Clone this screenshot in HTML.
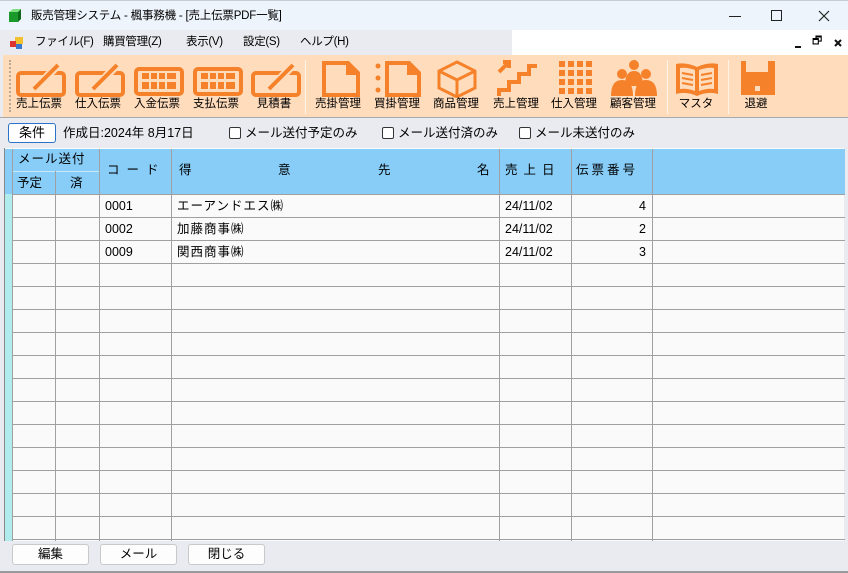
<!DOCTYPE html>
<html><head><meta charset="utf-8"><style>
*{margin:0;padding:0;box-sizing:border-box}
body{width:848px;height:573px;overflow:hidden;background:#e9ebf0;font-family:"Liberation Sans","Noto Sans CJK JP",sans-serif;position:relative;font-size:12px;color:#000}
.abs{position:absolute}
.tb{left:0;top:0;width:848px;height:30px;background:#eef4fb;border-top:1px solid #c8ccd2}
.menu{left:0;top:30px;width:848px;height:25px;background:#fff}
.menu .g{position:absolute;left:0;top:0;width:512px;height:25px;background:#e9ebf0}
.menu span{position:absolute;top:5px;font-size:11.5px;line-height:15px;letter-spacing:-0.3px}
.tool{left:3px;top:55px;width:845px;height:62px;background:#ffdcbc}
.btn{position:absolute;top:0;width:58px;height:62px;text-align:center}
.btn svg{position:absolute;left:4px;top:3px}
.btn .l{position:absolute;left:-6px;right:-6px;top:42px;font-size:11.5px;line-height:15px;text-align:center}
.sep{position:absolute;top:5px;width:1px;height:54px;background:#c8b9a8;border-right:1px solid #fff4ea}
.cond{left:0;top:118px;width:848px;height:30px}
.grid{left:4px;top:148px;width:840px;height:393px;background:#fafafa;border-left:1px solid #888}
.vl{position:absolute;top:1px;width:1px;height:392px;background:#a0a0a0}
.hl{position:absolute;left:7px;height:1px;width:833px;background:#a0a0a0}
.hdr{position:absolute;top:1px;height:45px;background:#87cdf7}
.t{position:absolute;font-size:12.5px;line-height:16px;white-space:nowrap}
.b{position:absolute;top:544px;width:77px;height:21px;background:#fdfdfd;border:1px solid #c9c9c9;border-radius:3px;text-align:center;font-size:12.5px;line-height:19px}
</style></head><body>
<div class="abs tb">
 <svg class="abs" style="left:8px;top:8px" width="14" height="14"><rect x="1" y="3" width="9" height="10" fill="#1a9a2a"/><polygon points="1,3 5,0 13,0 10,3" fill="#7ee07e"/><polygon points="10,3 13,0 13,10 10,13" fill="#0c6a18"/></svg>
 <div class="t" style="left:31px;top:7px;font-size:11.5px;letter-spacing:-0.2px">販売管理システム - 楓事務機 - [売上伝票PDF一覧]</div>
 <div class="abs" style="left:729px;top:15px;width:12px;height:1px;background:#222"></div>
 <div class="abs" style="left:771px;top:9px;width:11px;height:11px;border:1.3px solid #222"></div>
 <svg class="abs" style="left:818px;top:9px" width="12" height="12"><path d="M1 1 L11 11 M11 1 L1 11" stroke="#222" stroke-width="1.2"/></svg>
</div>
<div class="abs menu"><div class="g"></div>
 <svg class="abs" style="left:10px;top:7px" width="13" height="12"><rect x="5" y="0" width="8" height="7" fill="#f3c030"/><rect x="0" y="4" width="6" height="6" fill="#d33"/><rect x="6" y="7" width="6" height="5" fill="#3a78d0"/></svg>
 <span style="left:35px">ファイル(F)</span><span style="left:103px">購買管理(Z)</span><span style="left:186px">表示(V)</span><span style="left:243px">設定(S)</span><span style="left:300px">ヘルプ(H)</span>
 <div class="abs" style="left:795px;top:16px;width:6px;height:2px;background:#111"></div>
 <span style="left:812px;top:4px;font-size:11px">🗗</span>
 <svg class="abs" style="left:834px;top:9px" width="8" height="8"><path d="M1 1 L7 7 M7 1 L1 7" stroke="#111" stroke-width="2"/></svg>
</div>
<div class="abs tool">
 <div class="abs" style="left:6px;top:5px;height:52px;border-left:2px dotted #b8a898"></div>
 <div class="btn" style="left:7px"><svg width="52" height="40"><rect x="4" y="15" width="46" height="22" rx="3" fill="none" stroke="#f5822a" stroke-width="4"/><path d="M20 32 L44 7" stroke="#ffdcbc" stroke-width="8"/><path d="M20 31 L44 7" stroke="#f5822a" stroke-width="4"/></svg><div class="l">売上伝票</div></div>
 <div class="btn" style="left:66px"><svg width="52" height="40"><rect x="4" y="15" width="46" height="22" rx="3" fill="none" stroke="#f5822a" stroke-width="4"/><path d="M20 32 L44 7" stroke="#ffdcbc" stroke-width="8"/><path d="M20 31 L44 7" stroke="#f5822a" stroke-width="4"/></svg><div class="l">仕入伝票</div></div>
 <div class="btn" style="left:125px"><svg width="52" height="40"><rect x="4" y="11" width="46" height="25" rx="3" fill="none" stroke="#f5822a" stroke-width="4"/><g fill="#f5822a"><rect x="10" y="15" width="34" height="6"/><rect x="10" y="24" width="34" height="7"/></g><g fill="#ffdcbc"><rect x="17" y="15" width="2" height="16"/><rect x="25" y="15" width="2" height="16"/><rect x="33" y="15" width="2" height="16"/><rect x="10" y="22" width="34" height="2"/></g></svg><div class="l">入金伝票</div></div>
 <div class="btn" style="left:184px"><svg width="52" height="40"><rect x="4" y="11" width="46" height="25" rx="3" fill="none" stroke="#f5822a" stroke-width="4"/><g fill="#f5822a"><rect x="10" y="15" width="34" height="6"/><rect x="10" y="24" width="34" height="7"/></g><g fill="#ffdcbc"><rect x="17" y="15" width="2" height="16"/><rect x="25" y="15" width="2" height="16"/><rect x="33" y="15" width="2" height="16"/><rect x="10" y="22" width="34" height="2"/></g></svg><div class="l">支払伝票</div></div>
 <div class="btn" style="left:242px"><svg width="52" height="40"><rect x="4" y="15" width="46" height="22" rx="3" fill="none" stroke="#f5822a" stroke-width="4"/><path d="M20 32 L44 7" stroke="#ffdcbc" stroke-width="8"/><path d="M20 31 L44 7" stroke="#f5822a" stroke-width="4"/></svg><div class="l">見積書</div></div>
 <div class="sep" style="left:302px"></div>
 <div class="btn" style="left:306px"><svg width="52" height="40"><path d="M11 5 H35 L45 15 V37 H11 Z" fill="none" stroke="#f5822a" stroke-width="4"/><path d="M33 5 V17 H45" fill="#f5822a"/></svg><div class="l">売掛管理</div></div>
 <div class="btn" style="left:365px"><svg width="52" height="40"><g fill="#f5822a"><circle cx="6" cy="8" r="2.5"/><circle cx="6" cy="20" r="2.5"/><circle cx="6" cy="32" r="2.5"/></g><path d="M15 5 H37 L47 15 V37 H15 Z" fill="none" stroke="#f5822a" stroke-width="4"/><path d="M35 5 V17 H47" fill="#f5822a"/></svg><div class="l">買掛管理</div></div>
 <div class="btn" style="left:424px"><svg width="52" height="40"><path d="M26 4 L44 13 V30 L26 39 L8 30 V13 Z M8 13 L26 22 L44 13 M26 22 V39" fill="none" stroke="#f5822a" stroke-width="3"/></svg><div class="l">商品管理</div></div>
 <div class="btn" style="left:484px"><svg width="52" height="40"><path d="M6 38 V30 H16 V22 H26 V14 H36 V6 H46 V10 H40 V18 H30 V26 H20 V34 H10 V38 Z" fill="#f5822a"/><path d="M8 14 L18 4 M12 4 H18 V10" stroke="#f5822a" stroke-width="4" fill="none"/></svg><div class="l">売上管理</div></div>
 <div class="btn" style="left:542px"><svg width="52" height="40"><g fill="#f5822a"><rect x="10" y="3" width="6" height="6"/><rect x="19" y="3" width="6" height="6"/><rect x="28" y="3" width="6" height="6"/><rect x="37" y="3" width="6" height="6"/><rect x="10" y="12" width="6" height="6"/><rect x="19" y="12" width="6" height="6"/><rect x="28" y="12" width="6" height="6"/><rect x="37" y="12" width="6" height="6"/><rect x="10" y="21" width="6" height="6"/><rect x="19" y="21" width="6" height="6"/><rect x="28" y="21" width="6" height="6"/><rect x="37" y="21" width="6" height="6"/><rect x="10" y="30" width="6" height="6"/><rect x="19" y="30" width="6" height="6"/><rect x="28" y="30" width="6" height="6"/><rect x="37" y="30" width="6" height="6"/></g></svg><div class="l">仕入管理</div></div>
 <div class="btn" style="left:601px"><svg width="52" height="40"><g fill="#f5822a"><circle cx="26" cy="7" r="5"/><path d="M17 28 Q17 13 26 13 Q35 13 35 28 Z"/><circle cx="14" cy="16" r="5"/><circle cx="38" cy="16" r="5"/><path d="M3 38 Q3 22 14 22 Q25 22 25 38 Z"/><path d="M27 38 Q27 22 38 22 Q49 22 49 38 Z"/></g></svg><div class="l">顧客管理</div></div>
 <div class="sep" style="left:664px"></div>
 <div class="btn" style="left:664px"><svg width="52" height="40"><path d="M5 6 Q15 4 26 9 Q37 4 47 6 V36 Q37 33 26 38 Q15 33 5 36 Z" fill="#f5822a"/><path d="M9 10 Q16 9 24 12 V33 Q16 30 9 31 Z M28 12 Q36 9 43 10 V31 Q36 30 28 33 Z" fill="#ffdcbc"/><path d="M11 15 L22 17 M11 20 L22 22 M11 25 L22 27 M30 17 L41 15 M30 22 L41 20 M30 27 L41 25" stroke="#f5822a" stroke-width="2"/></svg><div class="l">マスタ</div></div>
 <div class="sep" style="left:725px"></div>
 <div class="btn" style="left:724px"><svg width="52" height="40"><rect x="10" y="3" width="34" height="34" fill="#f5822a"/><rect x="15" y="3" width="22" height="11" fill="#ffdcbc"/><rect x="24" y="28" width="5" height="5" fill="#ffdcbc"/></svg><div class="l">退避</div></div>
</div>
<div class="abs" style="left:0;top:117px;width:848px;height:1px;background:#a8a8a8"></div>
<div class="abs cond">
 <div class="abs" style="left:8px;top:5px;width:48px;height:20px;background:#fff;border:1px solid #2a73c8;border-radius:3px;text-align:center;font-size:13px;line-height:18px">条件</div>
 <div class="t" style="left:63px;top:7px">作成日:2024年 8月17日</div>
 <div class="abs" style="left:229px;top:9px;width:12px;height:12px;border:1px solid #333;border-radius:2px;background:#fff"></div><div class="t" style="left:245px;top:7px">メール送付予定のみ</div>
 <div class="abs" style="left:382px;top:9px;width:12px;height:12px;border:1px solid #333;border-radius:2px;background:#fff"></div><div class="t" style="left:398px;top:7px">メール送付済のみ</div>
 <div class="abs" style="left:519px;top:9px;width:12px;height:12px;border:1px solid #333;border-radius:2px;background:#fff"></div><div class="t" style="left:535px;top:7px">メール未送付のみ</div>
</div>
<div class="abs grid">
 <div class="hdr" style="left:0;width:840px"></div>
 <div class="abs" style="left:0;top:46px;width:7px;height:347px;background:#b0eced"></div>
 <div class="abs" style="left:7px;top:23px;width:87px;height:1px;background:#c8e8fc"></div>
 <div class="vl" style="left:7px"></div>
 <div class="vl" style="left:50px;top:23px;height:370px"></div>
 <div class="vl" style="left:94px"></div>
 <div class="vl" style="left:166px"></div>
 <div class="vl" style="left:494px"></div>
 <div class="vl" style="left:566px"></div>
 <div class="vl" style="left:647px"></div>
 <div class="hl" style="top:46px"></div><div class="hl" style="top:69px"></div><div class="hl" style="top:92px"></div><div class="hl" style="top:115px"></div><div class="hl" style="top:138px"></div><div class="hl" style="top:161px"></div><div class="hl" style="top:184px"></div><div class="hl" style="top:207px"></div><div class="hl" style="top:230px"></div><div class="hl" style="top:253px"></div><div class="hl" style="top:276px"></div><div class="hl" style="top:299px"></div><div class="hl" style="top:322px"></div><div class="hl" style="top:345px"></div><div class="hl" style="top:368px"></div><div class="hl" style="top:391px"></div>
 <div class="t" style="left:13px;top:3px;letter-spacing:1px">メール送付</div>
 <div class="t" style="left:12px;top:27px">予定</div><div class="t" style="left:65px;top:27px">済</div>
 <div class="t" style="left:102px;top:14px;letter-spacing:7px">コード</div>
 <div class="t" style="left:174px;top:14px">得</div><div class="t" style="left:273px;top:14px">意</div><div class="t" style="left:373px;top:14px">先</div><div class="t" style="left:472px;top:14px">名</div>
 <div class="t" style="left:500px;top:14px;letter-spacing:6px">売上日</div>
 <div class="t" style="left:571px;top:14px;letter-spacing:3px">伝票番号</div>
 <div class="t" style="left:100px;top:50px">0001</div><div class="t" style="left:172px;top:50px;letter-spacing:1px">エーアンドエス㈱</div><div class="t" style="left:500px;top:50px">24/11/02</div><div class="t" style="left:634px;top:50px">4</div>
 <div class="t" style="left:100px;top:73px">0002</div><div class="t" style="left:172px;top:73px;letter-spacing:1px">加藤商事㈱</div><div class="t" style="left:500px;top:73px">24/11/02</div><div class="t" style="left:634px;top:73px">2</div>
 <div class="t" style="left:100px;top:96px">0009</div><div class="t" style="left:172px;top:96px;letter-spacing:1px">関西商事㈱</div><div class="t" style="left:500px;top:96px">24/11/02</div><div class="t" style="left:634px;top:96px">3</div>
</div>
<div class="b" style="left:12px">編集</div>
<div class="b" style="left:100px">メール</div>
<div class="b" style="left:188px">閉じる</div>
<div class="abs" style="left:0;top:571px;width:848px;height:2px;background:#9a9a9a"></div>
</body></html>
